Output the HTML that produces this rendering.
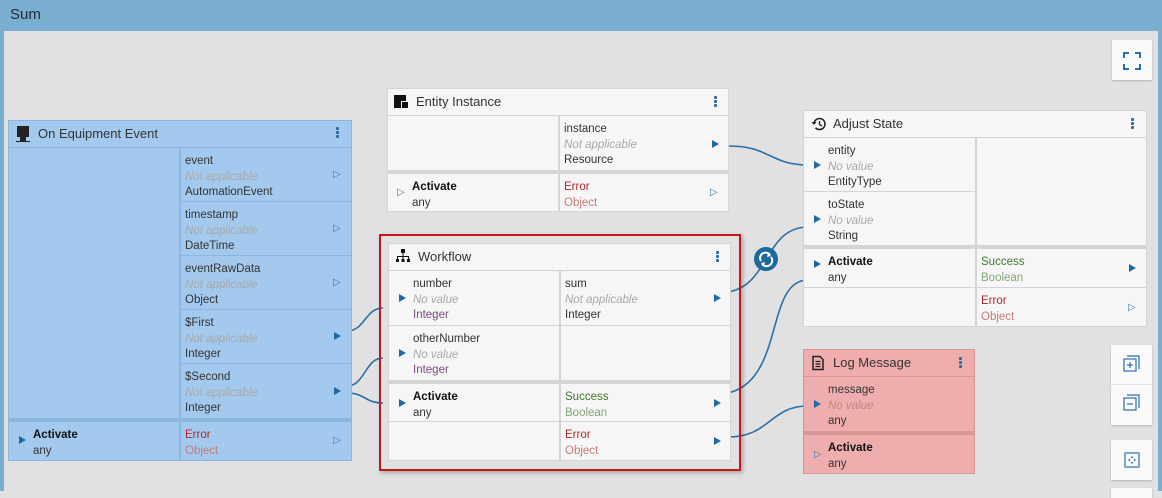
<!DOCTYPE html>
<html><head><meta charset="utf-8"><style>
*{box-sizing:border-box;margin:0;padding:0}
body{width:1162px;height:491px;overflow:hidden;position:relative;background:#e1e1e1;font-family:"Liberation Sans",sans-serif;font-size:12px;color:#333}
.a{position:absolute}
.c{position:absolute;padding-top:3px;line-height:15.5px;font-size:11.5px;white-space:nowrap}
.c .p{position:absolute;left:24px;top:6px}
.c .q{position:absolute;left:4px;top:6px}
.nv{color:#a8a8a8;font-style:italic}
.h{position:absolute;font-size:13px;line-height:26px;color:#333;white-space:nowrap}
.ar{position:absolute;width:0;height:0;border-top:4.5px solid transparent;border-bottom:4.5px solid transparent;border-left:7px solid #1e6aa6}
.ao{position:absolute;font-size:10px;color:#3a75b5;line-height:10px}
.k{position:absolute;width:3px;height:3px;background:#2a6aa6;border-radius:1px;box-shadow:0 4px 0 #2a6aa6,0 8px 0 #2a6aa6}
.g{background:#f6f6f6}
.b{background:#a4c9ef}
.r{background:#f0adad}
.green{color:#3c7a2c}.lg{color:#82a878}.red{color:#b5262b}.lr{color:#c77a7a}.pu{color:#7d4a80}
.btn{position:absolute;background:#fafafa;box-shadow:0 1px 2px rgba(0,0,0,.2)}
b{font-weight:600;color:#111}
</style></head><body>
<div class="a" style="left:0;top:0;width:1162px;height:31px;background:#7aaed0"></div>
<div class="a" style="left:10px;top:6px;font-size:15px;color:#1f2a33">Sum</div>
<div class="a" style="left:0;top:31px;width:4px;height:460px;background:#7aaed0"></div>
<div class="a" style="left:1158px;top:31px;width:4px;height:460px;background:#7aaed0"></div>

<svg class="a" style="left:0;top:0" width="1162" height="491">
<g fill="none" stroke="#2a6fa8" stroke-width="1.6">
<path d="M347,331 C365,331 365,308 383,308"/>
<path d="M347,386 C365,386 365,358 383,358"/>
<path d="M347,393 C365,393 365,403 383,403"/>
<path d="M729,146 C770,146 770,165 808,165"/>
<path d="M728,292 C770,285 765,227 808,227"/>
<path d="M728,393 C785,380 765,280 808,280"/>
<path d="M728,437 C770,437 770,406 808,406"/>
</g>
<circle cx="766" cy="259" r="12" fill="#1a6aa0"/>
<path d="M761,261 A5,5 0 0 1 770,255 M771,257 A5,5 0 0 1 762,264" fill="none" stroke="#fff" stroke-width="2"/>
<path d="M768,253 L771,256 L767,257 Z M764,266 L761,263 L765,262 Z" fill="#fff"/>
</svg>

<!-- On Equipment Event -->
<div class="a" style="left:8px;top:120px;width:344px;height:341px;background:#8cb6df"></div>
<div class="a b" style="left:9px;top:121px;width:342px;height:26px"></div>
<div class="a" style="left:17px;top:126px;width:12px;height:11px;background:#222"></div>
<div class="a" style="left:20px;top:137px;width:6px;height:4px;background:#222"></div>
<div class="a" style="left:16px;top:141px;width:14px;height:1px;background:#222"></div>
<div class="h" style="left:38px;top:121px">On Equipment Event</div>
<div class="k" style="left:336px;top:127px"></div>
<div class="c b" style="left:9px;top:148px;width:170px;height:270px"></div>
<div class="c b" style="left:181px;top:148px;width:170px;height:53px"><div class="q">event<br><span class="nv">Not applicable</span><br>AutomationEvent</div><div class="ao" style="left:152px;top:22px">▷</div></div>
<div class="c b" style="left:181px;top:202px;width:170px;height:53px"><div class="q">timestamp<br><span class="nv">Not applicable</span><br>DateTime</div><div class="ao" style="left:152px;top:22px">▷</div></div>
<div class="c b" style="left:181px;top:256px;width:170px;height:53px"><div class="q">eventRawData<br><span class="nv">Not applicable</span><br>Object</div><div class="ao" style="left:152px;top:22px">▷</div></div>
<div class="c b" style="left:181px;top:310px;width:170px;height:53px"><div class="q">$First<br><span class="nv">Not applicable</span><br>Integer</div><div class="ar" style="left:153px;top:22px"></div></div>
<div class="c b" style="left:181px;top:364px;width:170px;height:54px"><div class="q">$Second<br><span class="nv">Not applicable</span><br>Integer</div><div class="ar" style="left:153px;top:23px"></div></div>
<div class="c b" style="left:9px;top:422px;width:170px;height:38px"><div class="ar" style="left:10px;top:14px"></div><div class="p"><b>Activate</b><br>any</div></div>
<div class="c b" style="left:181px;top:422px;width:170px;height:38px"><div class="q"><span class="red">Error</span><br><span class="lr">Object</span></div><div class="ao" style="left:152px;top:14px">▷</div></div>

<!-- Entity Instance -->
<div class="a" style="left:387px;top:88px;width:342px;height:124px;background:#d6d6d6"></div>
<div class="a g" style="left:388px;top:89px;width:340px;height:26px"></div>
<div class="a" style="left:394px;top:95px;width:12px;height:13px;background:#111"></div>
<div class="a" style="left:401px;top:101px;width:8px;height:8px;background:#111;border:1px solid #f6f6f6"></div>
<div class="h" style="left:416px;top:89px">Entity Instance</div>
<div class="k" style="left:714px;top:96px"></div>
<div class="c g" style="left:388px;top:116px;width:170px;height:54px"></div>
<div class="c g" style="left:560px;top:116px;width:168px;height:54px"><div class="q">instance<br><span class="nv">Not applicable</span><br>Resource</div><div class="ar" style="left:152px;top:24px"></div></div>
<div class="c g" style="left:388px;top:174px;width:170px;height:37px"><div class="ao" style="left:9px;top:14px">▷</div><div class="p"><b>Activate</b><br>any</div></div>
<div class="c g" style="left:560px;top:174px;width:168px;height:37px"><div class="q"><span class="red">Error</span><br><span class="lr">Object</span></div><div class="ao" style="left:150px;top:14px">▷</div></div>

<!-- Workflow -->
<div class="a" style="left:379px;top:234px;width:362px;height:237px;border:2px solid #c8141c;box-shadow:2px 2px 4px rgba(0,0,0,.25)"></div>
<div class="a" style="left:388px;top:243px;width:343px;height:218px;background:#d4d4d4"></div>
<div class="a g" style="left:389px;top:244px;width:341px;height:26px"></div>
<svg class="a" style="left:396px;top:249px" width="14" height="14"><g fill="#111"><rect x="5" y="0" width="4" height="4"/><rect x="6.5" y="4" width="1" height="3"/><rect x="1" y="7" width="12" height="1"/><rect x="1" y="7" width="1" height="3"/><rect x="6.5" y="7" width="1" height="3"/><rect x="12" y="7" width="1" height="3"/><rect x="0" y="10" width="3" height="3"/><rect x="5.5" y="10" width="3" height="3"/><rect x="11" y="10" width="3" height="3"/></g></svg>
<div class="h" style="left:418px;top:244px">Workflow</div>
<div class="k" style="left:716px;top:251px"></div>
<div class="c g" style="left:389px;top:271px;width:170px;height:54px"><div class="ar" style="left:10px;top:23px"></div><div class="p">number<br><span class="nv">No value</span><br><span class="pu">Integer</span></div></div>
<div class="c g" style="left:561px;top:271px;width:169px;height:54px"><div class="q">sum<br><span class="nv">Not applicable</span><br>Integer</div><div class="ar" style="left:153px;top:23px"></div></div>
<div class="c g" style="left:389px;top:326px;width:170px;height:54px"><div class="ar" style="left:10px;top:23px"></div><div class="p">otherNumber<br><span class="nv">No value</span><br><span class="pu">Integer</span></div></div>
<div class="c g" style="left:561px;top:326px;width:169px;height:54px"></div>
<div class="c g" style="left:389px;top:384px;width:170px;height:37px"><div class="ar" style="left:10px;top:15px"></div><div class="p"><b>Activate</b><br>any</div></div>
<div class="c g" style="left:561px;top:384px;width:169px;height:37px"><div class="q"><span class="green">Success</span><br><span class="lg">Boolean</span></div><div class="ar" style="left:153px;top:15px"></div></div>
<div class="c g" style="left:389px;top:422px;width:170px;height:38px"></div>
<div class="c g" style="left:561px;top:422px;width:169px;height:38px"><div class="q"><span class="red">Error</span><br><span class="lr">Object</span></div><div class="ar" style="left:153px;top:15px"></div></div>

<!-- Adjust State -->
<div class="a" style="left:803px;top:110px;width:344px;height:217px;background:#d4d4d4"></div>
<div class="a g" style="left:804px;top:111px;width:342px;height:26px"></div>
<svg class="a" style="left:811px;top:116px" width="16" height="16"><path d="M3,8 A5.5,5.5 0 1 1 4.5,11.8" fill="none" stroke="#222" stroke-width="1.6"/><path d="M0.5,6 L3,9 L5.5,6 Z" fill="#222"/><path d="M8.5,5 V8.5 L11,10" fill="none" stroke="#222" stroke-width="1.4"/></svg>
<div class="h" style="left:833px;top:111px">Adjust State</div>
<div class="k" style="left:1131px;top:118px"></div>
<div class="c g" style="left:804px;top:138px;width:171px;height:53px"><div class="ar" style="left:10px;top:23px"></div><div class="p">entity<br><span class="nv">No value</span><br>EntityType</div></div>
<div class="c g" style="left:804px;top:192px;width:171px;height:53px"><div class="ar" style="left:10px;top:23px"></div><div class="p">toState<br><span class="nv">No value</span><br>String</div></div>
<div class="c g" style="left:977px;top:138px;width:169px;height:107px"></div>
<div class="c g" style="left:804px;top:249px;width:171px;height:38px"><div class="ar" style="left:10px;top:11px"></div><div class="p"><b>Activate</b><br>any</div></div>
<div class="c g" style="left:977px;top:249px;width:169px;height:38px"><div class="q"><span class="green">Success</span><br><span class="lg">Boolean</span></div><div class="ar" style="left:152px;top:15px"></div></div>
<div class="c g" style="left:804px;top:288px;width:171px;height:38px"></div>
<div class="c g" style="left:977px;top:288px;width:169px;height:38px"><div class="q"><span class="red">Error</span><br><span class="lr">Object</span></div><div class="ao" style="left:151px;top:15px">▷</div></div>

<!-- Log Message -->
<div class="a" style="left:803px;top:349px;width:172px;height:125px;background:#d99696"></div>
<div class="a r" style="left:804px;top:350px;width:170px;height:26px"></div>
<svg class="a" style="left:811px;top:355px" width="14" height="16"><path d="M2,1.5 H9 L12,4.5 V14.5 H2 Z" fill="none" stroke="#222" stroke-width="1.5"/><path d="M4.5,6.5 H9.5 M4.5,9 H9.5 M4.5,11.5 H9.5" stroke="#222" stroke-width="1.2"/></svg>
<div class="h" style="left:833px;top:350px">Log Message</div>
<div class="k" style="left:959px;top:357px"></div>
<div class="c r" style="left:804px;top:377px;width:170px;height:54px"><div class="ar" style="left:10px;top:23px"></div><div class="p">message<br><span class="nv" style="color:#b88">No value</span><br>any</div></div>
<div class="c r" style="left:804px;top:435px;width:170px;height:38px"><div class="ao" style="left:10px;top:15px">▷</div><div class="p"><b>Activate</b><br>any</div></div>

<!-- Buttons -->
<div class="btn" style="left:1112px;top:40px;width:40px;height:40px"></div>
<svg class="a" style="left:1123px;top:52px" width="18" height="18"><path d="M1,6 V1 H6 M12,1 H17 V6 M17,12 V17 H12 M6,17 H1 V12" fill="none" stroke="#2a70b0" stroke-width="2"/></svg>
<div class="btn" style="left:1111px;top:345px;width:41px;height:80px"></div>
<div class="a" style="left:1111px;top:384px;width:41px;height:1px;background:#e4e4e4"></div>
<svg class="a" style="left:1123px;top:355px" width="18" height="20"><path d="M4,1 H16 V14" fill="none" stroke="#2a70b0" stroke-width="1.2"/><rect x="1" y="4" width="12" height="12" fill="none" stroke="#2a70b0" stroke-width="1.2"/><path d="M4,10 H10 M7,7 V13" stroke="#2a70b0" stroke-width="1.2"/></svg>
<svg class="a" style="left:1123px;top:394px" width="18" height="20"><path d="M4,1 H16 V14" fill="none" stroke="#2a70b0" stroke-width="1.2"/><rect x="1" y="4" width="12" height="12" fill="none" stroke="#2a70b0" stroke-width="1.2"/><path d="M4,10 H10" stroke="#2a70b0" stroke-width="1.2"/></svg>
<div class="btn" style="left:1111px;top:440px;width:41px;height:40px"></div>
<svg class="a" style="left:1124px;top:452px" width="16" height="16"><rect x="1" y="1" width="14" height="14" fill="none" stroke="#2a70b0" stroke-width="1.2"/><path d="M8,4 L6.5,6 H9.5Z M8,12 L6.5,10 H9.5Z M4,8 L6,6.5 V9.5Z M12,8 L10,6.5 V9.5Z" fill="#2a70b0"/></svg>
<div class="btn" style="left:1111px;top:488px;width:41px;height:10px"></div>
</body></html>
